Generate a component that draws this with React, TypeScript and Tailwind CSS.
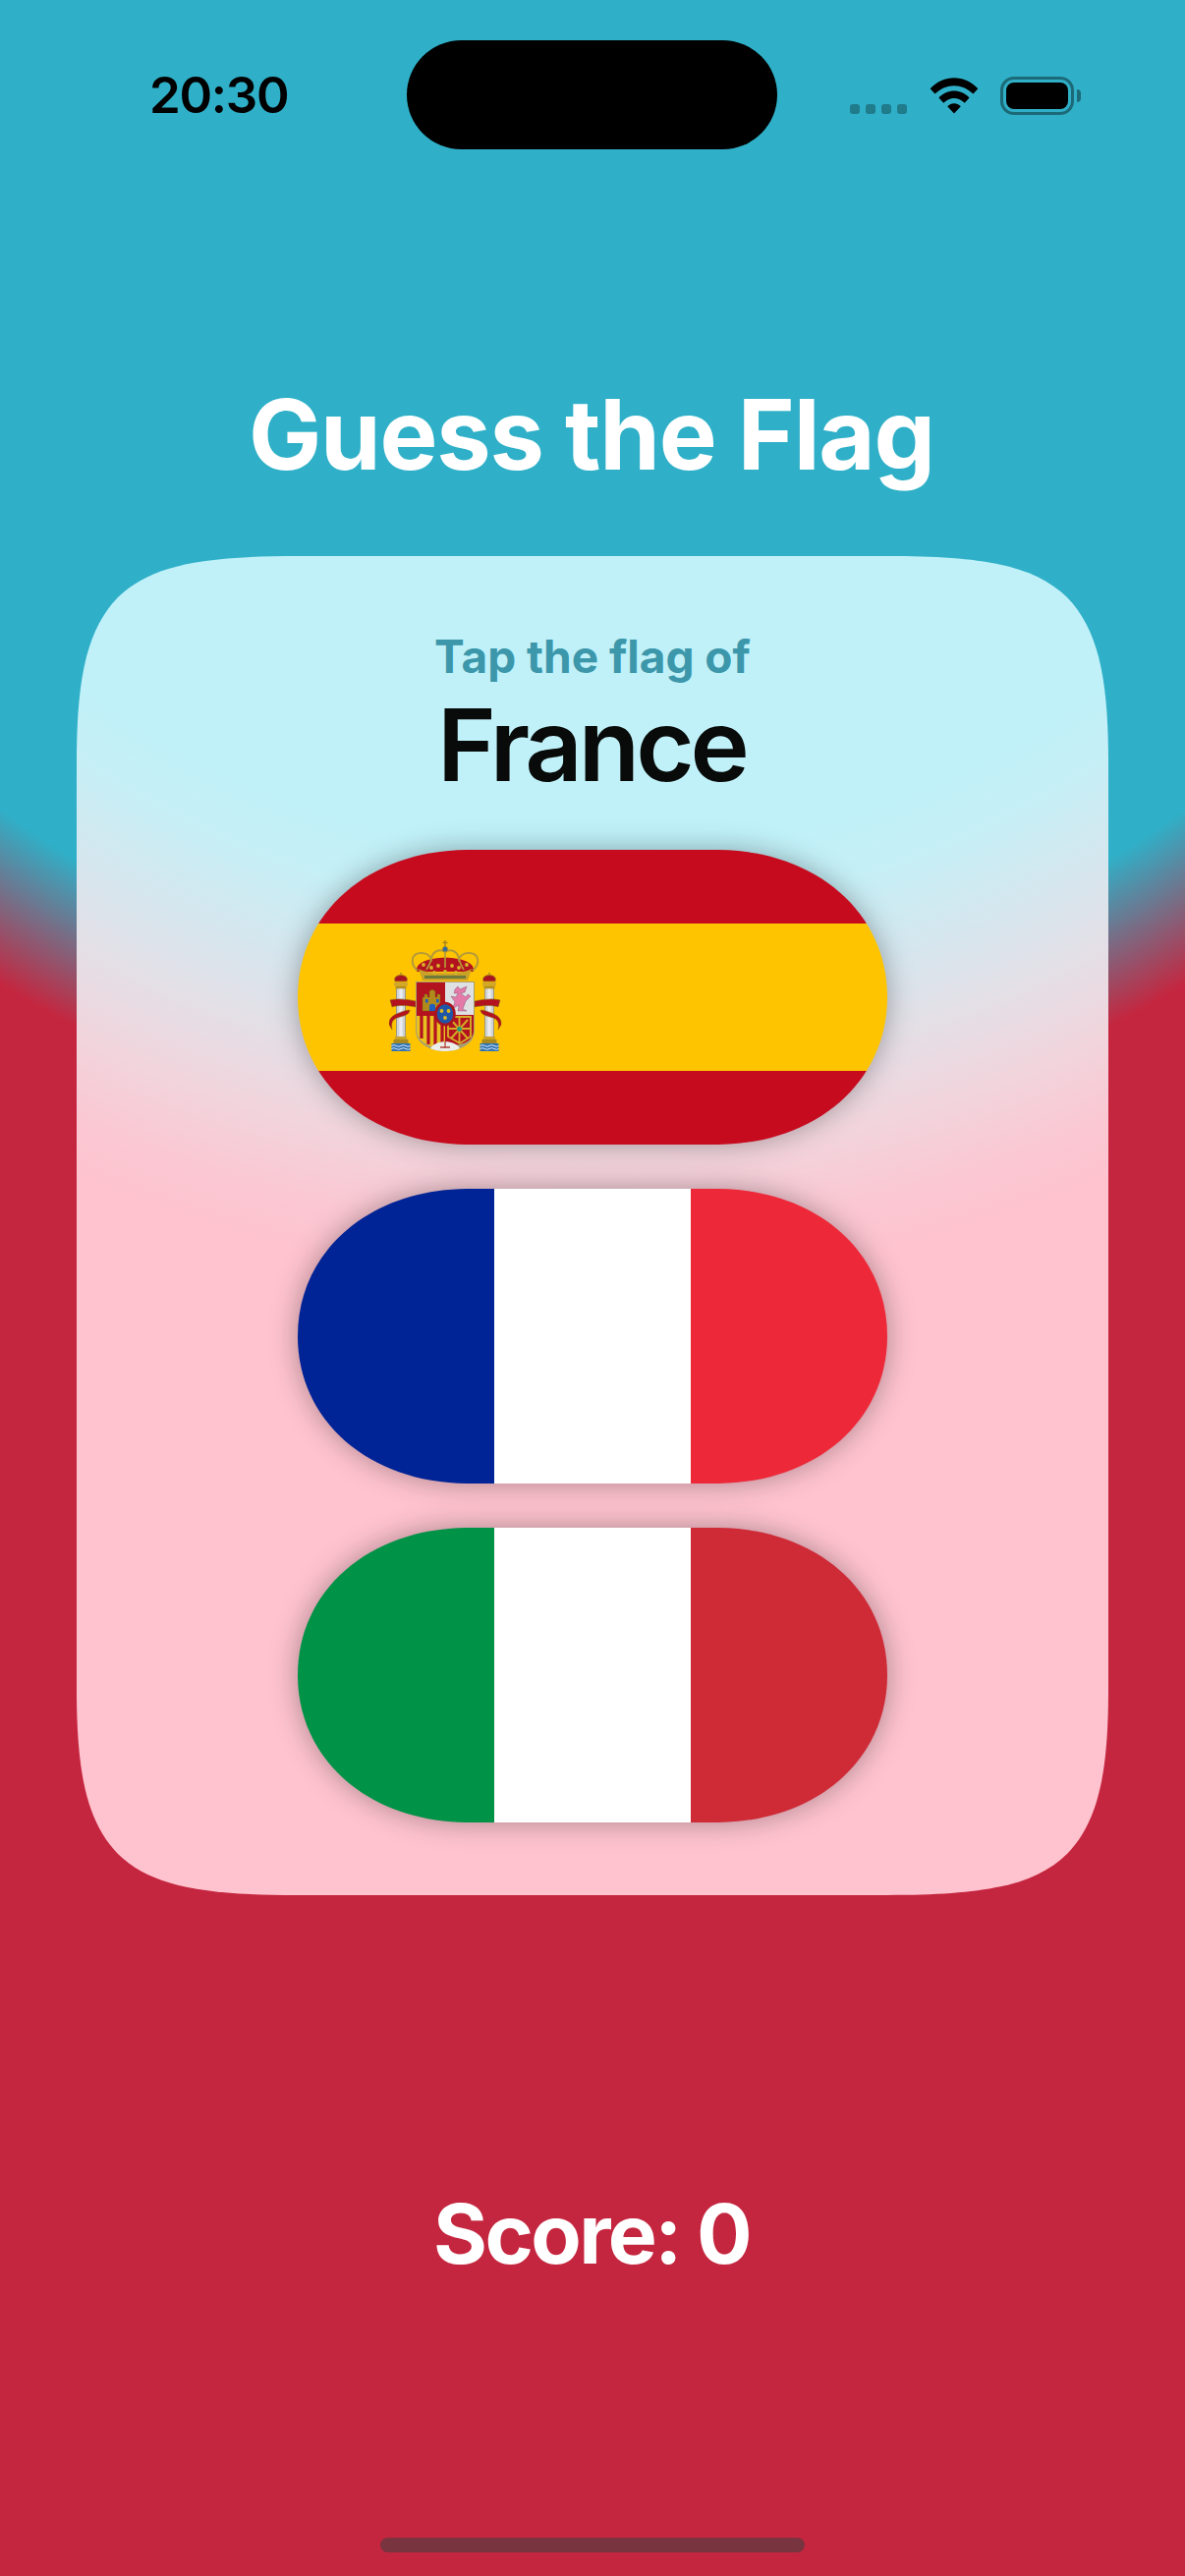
function Pill({ children }: { children: React.ReactNode }) {
  return (
    <div className="w-[600px] h-[300px] [filter:drop-shadow(0_0_14px_rgba(0,0,0,0.32))]">
      <div className="w-[600px] h-[300px] overflow-hidden [clip-path:path('M172,0_L428,0_C528,1_600,64_600,150_C600,236_528,299_428,300_L172,300_C72,299_0,236_0,150_C0,64_72,1_172,0_Z')]">
        {children}
      </div>
    </div>
  );
}

function Column({ x }: { x: number }) {
  return (
    <g transform={`translate(${x} 0)`}>
      <path d="M0,33 L0,36" stroke="#8d7a22" strokeWidth="1.2" />
      <path d="M-6,42 C-8,37 -3,35.5 0,35.5 C3,35.5 8,37 6,42 Z" fill="#a8141f" stroke="#a8841a" strokeWidth="0.9" />
      <rect x="-7" y="43" width="14" height="3.5" fill="#d4a92a" />
      <rect x="-5.5" y="46.5" width="11" height="3" fill="#b4901f" />
      <rect x="-5" y="49.5" width="10" height="48.5" fill="#8f8a62" />
      <rect x="-4.2" y="49.5" width="8.4" height="48.5" fill="#cfd2d6" />
      <rect x="-1.6" y="49.5" width="3.2" height="48.5" fill="#e9ebee" />
      <rect x="-6" y="98" width="12" height="3" fill="#c9a227" />
      <rect x="-7.5" y="101" width="15" height="4" fill="#a88a1e" />
      <rect x="-9.5" y="105" width="19" height="8" fill="#2f74b5" />
      <path d="M-9.5,107.5 q2.4,-1.6 4.8,0 t4.8,0 t4.8,0 t4.6,0 M-9.5,110.5 q2.4,-1.6 4.8,0 t4.8,0 t4.8,0 t4.6,0" stroke="#f2f5f8" strokeWidth="0.9" fill="none" />
    </g>
  );
}

function Arms() {
  return (
    <svg width="116" height="116" viewBox="0 0 116 116" className="shrink-0">
      <Column x={12} />
      <Column x={102} />
      <path d="M1,61 C8,59 18,60 27,62 L27,68 C18,66 8,66 3,68 Z" fill="#b3121f" stroke="#8a6d10" strokeWidth="0.6" />
      <path d="M87,62 C96,60 106,59 113,61 L111,68 C106,66 96,66 87,68 Z" fill="#b3121f" stroke="#8a6d10" strokeWidth="0.6" />
      <path d="M21,71 C21,77 12,77 6,80 C3,82 2,85 3,91 L0,86 C-1,80 4,76 10,74 C15,72 18,71 21,71 Z" fill="#b3121f" stroke="#8a6d10" strokeWidth="0.5" />
      <path d="M93,71 C93,77 102,77 108,80 C111,82 112,85 111,91 L114,86 C115,80 110,76 104,74 C99,72 96,71 93,71 Z" fill="#b3121f" stroke="#8a6d10" strokeWidth="0.5" />

      <path d="M28,32 C24,13 90,13 86,32 Z" fill="#b3121f" />
      <path d="M29,31 C21,24 22,13 33,13 C38,13 41,15 43,19 C44,11 52,8 57,12 C62,8 70,11 71,19 C73,15 76,13 81,13 C92,13 93,24 85,31" fill="none" stroke="#b39a3a" strokeWidth="2" />
      <path d="M43,19 C42,23 40,27 38,30 M71,19 C72,23 74,27 76,30 M57,12 L57,28" fill="none" stroke="#b39a3a" strokeWidth="1.7" />
      <path d="M57,0 L57,7 M54.5,2.5 L59.5,2.5" stroke="#a8841a" strokeWidth="1.4" />
      <circle cx="57" cy="9" r="2.6" fill="#2d6ca8" stroke="#a8841a" strokeWidth="0.6" />
      <path d="M30,29 C38,35 76,35 84,29 L80,41 L34,41 Z" fill="#c9a227" />
      <rect x="36" y="36" width="42" height="3" fill="#6f7a3a" />
      <circle cx="35" cy="25" r="1.9" fill="#d9b52a" /><circle cx="43" cy="28" r="1.9" fill="#d9b52a" /><circle cx="50" cy="26" r="1.9" fill="#d9b52a" /><circle cx="64" cy="26" r="1.9" fill="#d9b52a" /><circle cx="71" cy="28" r="1.9" fill="#d9b52a" /><circle cx="79" cy="25" r="1.9" fill="#d9b52a" />
      <circle cx="57" cy="32" r="1.9" fill="#d9b52a" /><circle cx="46" cy="33" r="1.9" fill="#d9b52a" /><circle cx="68" cy="33" r="1.9" fill="#d9b52a" />

      <path d="M27,42 L87,42 L87,92 C87,104 74,113 57,113 C40,113 27,104 27,92 Z" fill="#a8a070" />
      <path d="M28,43 L57,43 L57,77 L28,77 Z" fill="#b3121f" />
      <path d="M57,43 L86,43 L86,76 L57,76 Z" fill="#dfe0e2" />
      <path d="M67,50 L70,47 L72,50 L79,47 L77,53 L73,54 L78,58 L80,55 L83,57 L78,62 L75,70 L79,72 L70,72 L71,66 L64,70 L67,63 L63,57 L68,58 L70,54 L66,54 Z" fill="#e37aa8" stroke="#7a4a6a" strokeWidth="0.4" />
      <path d="M34,58 L36,58 L36,55 L39,55 L39,58 L41,58 L41,52 L44,50 L47,52 L47,58 L49,58 L49,55 L52,55 L52,58 L52,72 L34,72 Z" fill="#b08a1c" stroke="#6f5a10" strokeWidth="0.4" />
      <path d="M41,72 L41,67 C41,64 47,64 47,67 L47,72 Z" fill="#1e5fc0" />
      <rect x="37" y="60" width="2.6" height="3.5" fill="#1e5fc0" /><rect x="48" y="60" width="2.6" height="3.5" fill="#1e5fc0" />
      <path d="M28,77 L57,77 L57,109 C42,111 28,103 28,92 Z" fill="#e8c020" />
      <path d="M33,77 L33,100 M40,77 L40,106 M47,77 L47,108 M54,77 L54,108" stroke="#b3121f" strokeWidth="3.2" />
      <path d="M57,76 L86,76 L86,92 C86,102 75,109 57,106 Z" fill="#b3121f" />
      <path d="M60,78 L83,78 L83,98 L72,105 L60,98 Z M71.5,79 L71.5,104 M60,90 L83,90 M63,81 L80,100 M80,81 L63,100" fill="none" stroke="#d4ac25" strokeWidth="1.9" />
      <circle cx="71.5" cy="90.5" r="2.4" fill="#1f9a7c" />
      <path d="M42,110 C47,101 67,101 72,110 C66,114 48,114 42,110 Z" fill="#eceeea" />
      <path d="M57,103 L57,110 M52,109 L62,109" stroke="#b3433a" strokeWidth="1.3" />
      <ellipse cx="57" cy="75" rx="9.5" ry="11" fill="#1f57a8" stroke="#a8141f" strokeWidth="2.6" />
      <circle cx="53.5" cy="72" r="1.9" fill="#e0b820" /><circle cx="60.5" cy="72" r="1.9" fill="#e0b820" /><circle cx="57" cy="79" r="1.9" fill="#e0b820" />
    </svg>
  );
}

function Wifi() {
  return (
    <svg width="50" height="37" viewBox="0 0 50 38" className="mb-[1px]">
      <path d="M0,11.5 C14,-3.5 36,-3.5 50,11.5 L45,17 C33,5.5 17,5.5 5,17 Z" fill="#000" />
      <path d="M9,21 C18,11.5 32,11.5 41,21 L36,26.5 C29.5,20 20.5,20 14,26.5 Z" fill="#000" />
      <path d="M18,30 C22,26 28,26 32,30 L25,37.5 Z" fill="#000" />
    </svg>
  );
}

export default function App() {
  return (
    <div className="relative flex flex-col items-center w-[1206px] h-[2622px] overflow-hidden font-['Inter','Liberation_Sans',sans-serif] bg-[radial-gradient(circle_at_50%_0,#2fb0c8_1020px,#c5263f_1170px)]">
      <div className="flex items-start w-full h-[152px] pt-[41px] shrink-0">
        <div className="w-[414px] h-[111px] flex items-center pl-[152px] text-[51px] font-semibold text-black leading-none tracking-[-1.3px]">20:30</div>
        <div className="w-[377px] h-[111px] rounded-[56px] bg-black" />
        <div className="flex items-end pl-[74px] pt-[37px]">
          <div className="flex gap-[6px] mr-[23px] mb-[1px]">
            <span className="w-[10px] h-[10px] rounded-[3px] bg-black/30" />
            <span className="w-[10px] h-[10px] rounded-[3px] bg-black/30" />
            <span className="w-[10px] h-[10px] rounded-[3px] bg-black/30" />
            <span className="w-[10px] h-[10px] rounded-[3px] bg-black/30" />
          </div>
          <Wifi />
          <div className="ml-[22px] w-[75px] h-[39px] rounded-[14px] border-[3px] border-black/40 p-[3px]">
            <div className="w-full h-full rounded-[8px] bg-black" />
          </div>
          <div className="ml-[3px] mb-[13px] w-[4px] h-[13px] rounded-r-[4px] bg-black/40" />
        </div>
      </div>
      <h1 className="mt-[230px] h-[184px] text-[99px] leading-[120px] font-bold text-white tracking-[-1.2px] shrink-0 pr-[2px]">Guess the Flag</h1>
      <div className="w-[1050px] h-[1363px] shrink-0 flex flex-col items-center pt-[75px] bg-[radial-gradient(circle_at_525px_-566px,#c0f1f9_860px,#c6eff6_930px,#d6e6ee_1020px,#e4dfe6_1095px,#f2d4dc_1180px,#fac8d3_1250px,#fec3cf_1310px)] [clip-path:path('M225,0_L825,0_C925,0_975,10_1008,42_C1040,75_1050,125_1050,210_L1050,1153_C1050,1238_1040,1288_1008,1321_C975,1353_925,1363_825,1363_L225,1363_C125,1363_75,1353_42,1321_C10,1288_0,1238_0,1153_L0,210_C0,125_10,75_42,42_C75,10_125,0_225,0_Z')]">
        <div className="text-[46px] leading-[54px] font-bold text-[#3c97ab]">Tap the flag of</div>
        <div className="text-[102px] leading-[124px] font-[560] text-[#080b09] tracking-[-4px] mt-[1px] pr-[2px]">France</div>
        <div className="flex flex-col gap-[45px] mt-[45px]">
          <Pill>
            <div className="flex flex-col w-full h-full">
              <div className="h-[75px] bg-[#c60b1e]" />
              <div className="h-[150px] bg-[#ffc400] flex items-center pl-[93px]"><Arms /></div>
              <div className="h-[75px] bg-[#c60b1e]" />
            </div>
          </Pill>
          <Pill>
            <div className="flex w-full h-full">
              <div className="w-[200px] bg-[#002395]" />
              <div className="w-[200px] bg-white" />
              <div className="w-[200px] bg-[#ed2939]" />
            </div>
          </Pill>
          <Pill>
            <div className="flex w-full h-full">
              <div className="w-[200px] bg-[#009246]" />
              <div className="w-[200px] bg-white" />
              <div className="w-[200px] bg-[#ce2b37]" />
            </div>
          </Pill>
        </div>
      </div>
      <div className="mt-[294px] text-[84px] leading-[102px] font-bold text-white tracking-[-2.6px] pr-[2px]">Score: 0</div>
      <div className="absolute left-[387px] top-[2583px] w-[432px] h-[15px] rounded-full bg-[#78343f]" />
    </div>
  );
}
